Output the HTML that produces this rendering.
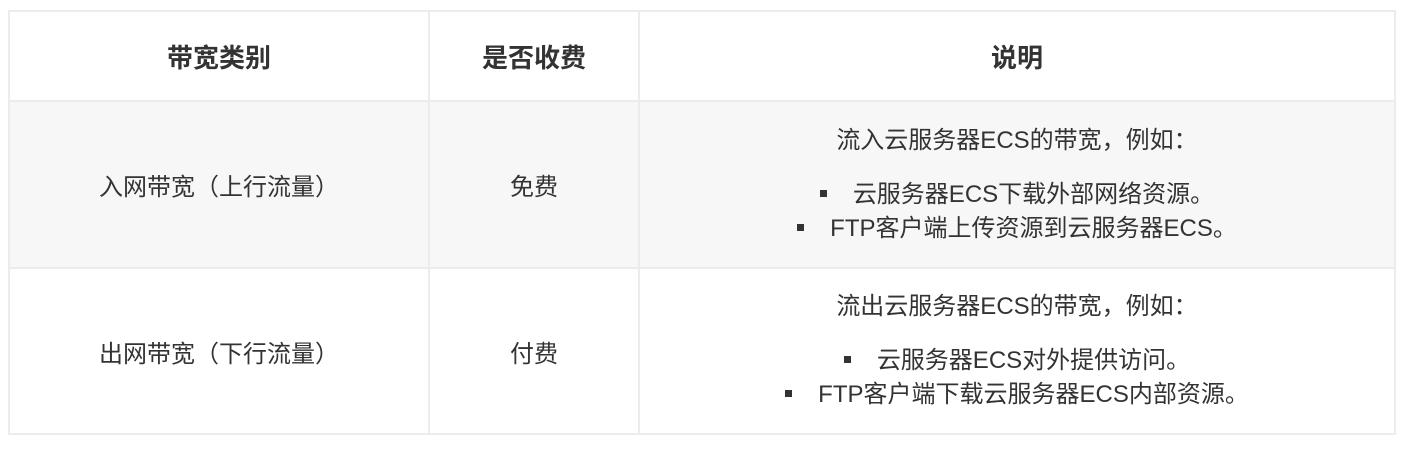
<!DOCTYPE html>
<html><head><meta charset="utf-8"><style>
html,body{margin:0;padding:0;background:#fff;}
body{width:1424px;height:450px;position:relative;font-family:"Liberation Sans","Noto Sans CJK SC",sans-serif;color:#333;}
table{position:absolute;left:8px;top:10px;border-collapse:collapse;width:1388px;}
td,th{border:2px solid #ececec;text-align:center;padding:0;font-size:24px;}
th{height:88px;font-weight:bold;font-size:26px;color:#333;}
tr.g td{background:#f7f7f7;}
.p{margin:0;line-height:34px;}
ul{list-style:none;margin:20px 0 0 0;padding:0;}
li{line-height:34px;}
li:before{content:"";display:inline-block;width:7px;height:7px;background:#333;vertical-align:middle;margin-right:26px;position:relative;top:-2px;}
</style></head><body>
<table>
<tr><th style="width:418px">带宽类别</th><th style="width:208px">是否收费</th><th>说明</th></tr>
<tr class="g"><td style="height:165px">入网带宽（上行流量）</td><td>免费</td><td>
<p class="p">流入云服务器ECS的带宽，例如：</p>
<ul><li>云服务器ECS下载外部网络资源。</li><li>FTP客户端上传资源到云服务器ECS。</li></ul></td></tr>
<tr><td style="height:164px">出网带宽（下行流量）</td><td>付费</td><td>
<p class="p">流出云服务器ECS的带宽，例如：</p>
<ul><li>云服务器ECS对外提供访问。</li><li>FTP客户端下载云服务器ECS内部资源。</li></ul></td></tr>
</table>
</body></html>
